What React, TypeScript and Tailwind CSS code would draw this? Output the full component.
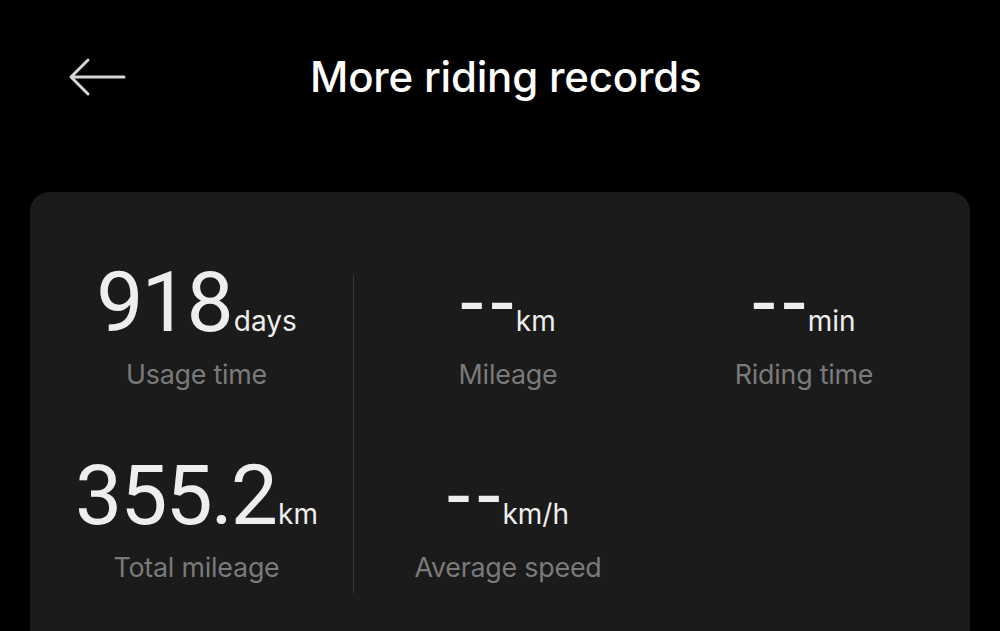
import React from 'react'

type Stat = { value: string; unit: string; label: string }

function StatBlock({ value, unit, label }: Stat) {
  const empty = value === '--'
  return (
    <div className="flex flex-col items-center">
      <div className="flex items-baseline leading-none text-[#eeeeee]">
        {empty ? (
          <span className='text-[84px] font-["Roboto",sans-serif]'>
            <span>-</span>
            <span className="ml-[7px]">-</span>
          </span>
        ) : (
          <span className='text-[84px] tracking-[-2px] font-["Roboto",sans-serif]'>{value}</span>
        )}
        <span className="ml-[2px] text-[28px]">{unit}</span>
      </div>
      <div className="mt-[16px] text-[26.8px] leading-none tracking-[-0.2px] text-[#7a7a7a]">{label}</div>
    </div>
  )
}

export default function App() {
  return (
    <div
      className="h-[631px] w-[1000px] overflow-hidden bg-black"
      style={{ fontFamily: 'Inter, "Noto Sans", sans-serif' }}
    >
      <header className="flex h-[152px] items-start pt-[54px]">
        <button className="ml-[68px] mt-[3px] text-[#d6d6d6]">
          <svg width="58" height="40" viewBox="0 0 58 40" fill="none">
            <path d="M56 20H4M20 3L3 20L20 37" stroke="currentColor" strokeWidth="3" strokeLinecap="round" strokeLinejoin="round" />
          </svg>
        </button>
        <h1 className="ml-[184px] mt-[2px] text-[42px] font-medium leading-none tracking-[-0.2px] text-white">
          More riding records
        </h1>
      </header>

      <div className="mx-[30px] mt-[40px] h-[500px] rounded-[20px] bg-[#1b1b1b] px-[10px] pt-[69px]">
        <div className="flex">
          <div className="flex w-[313px] flex-col gap-[66px]">
            <StatBlock value="918" unit="days" label="Usage time" />
            <StatBlock value="355.2" unit="km" label="Total mileage" />
          </div>
          <div className="mt-[14px] h-[318px] w-px bg-[#3a3a3a]" />
          <div className="flex w-[308px] flex-col gap-[66px]">
            <StatBlock value="--" unit="km" label="Mileage" />
            <StatBlock value="--" unit="km/h" label="Average speed" />
          </div>
          <div className="flex w-[284px] flex-col">
            <StatBlock value="--" unit="min" label="Riding time" />
          </div>
        </div>
      </div>
    </div>
  )
}
